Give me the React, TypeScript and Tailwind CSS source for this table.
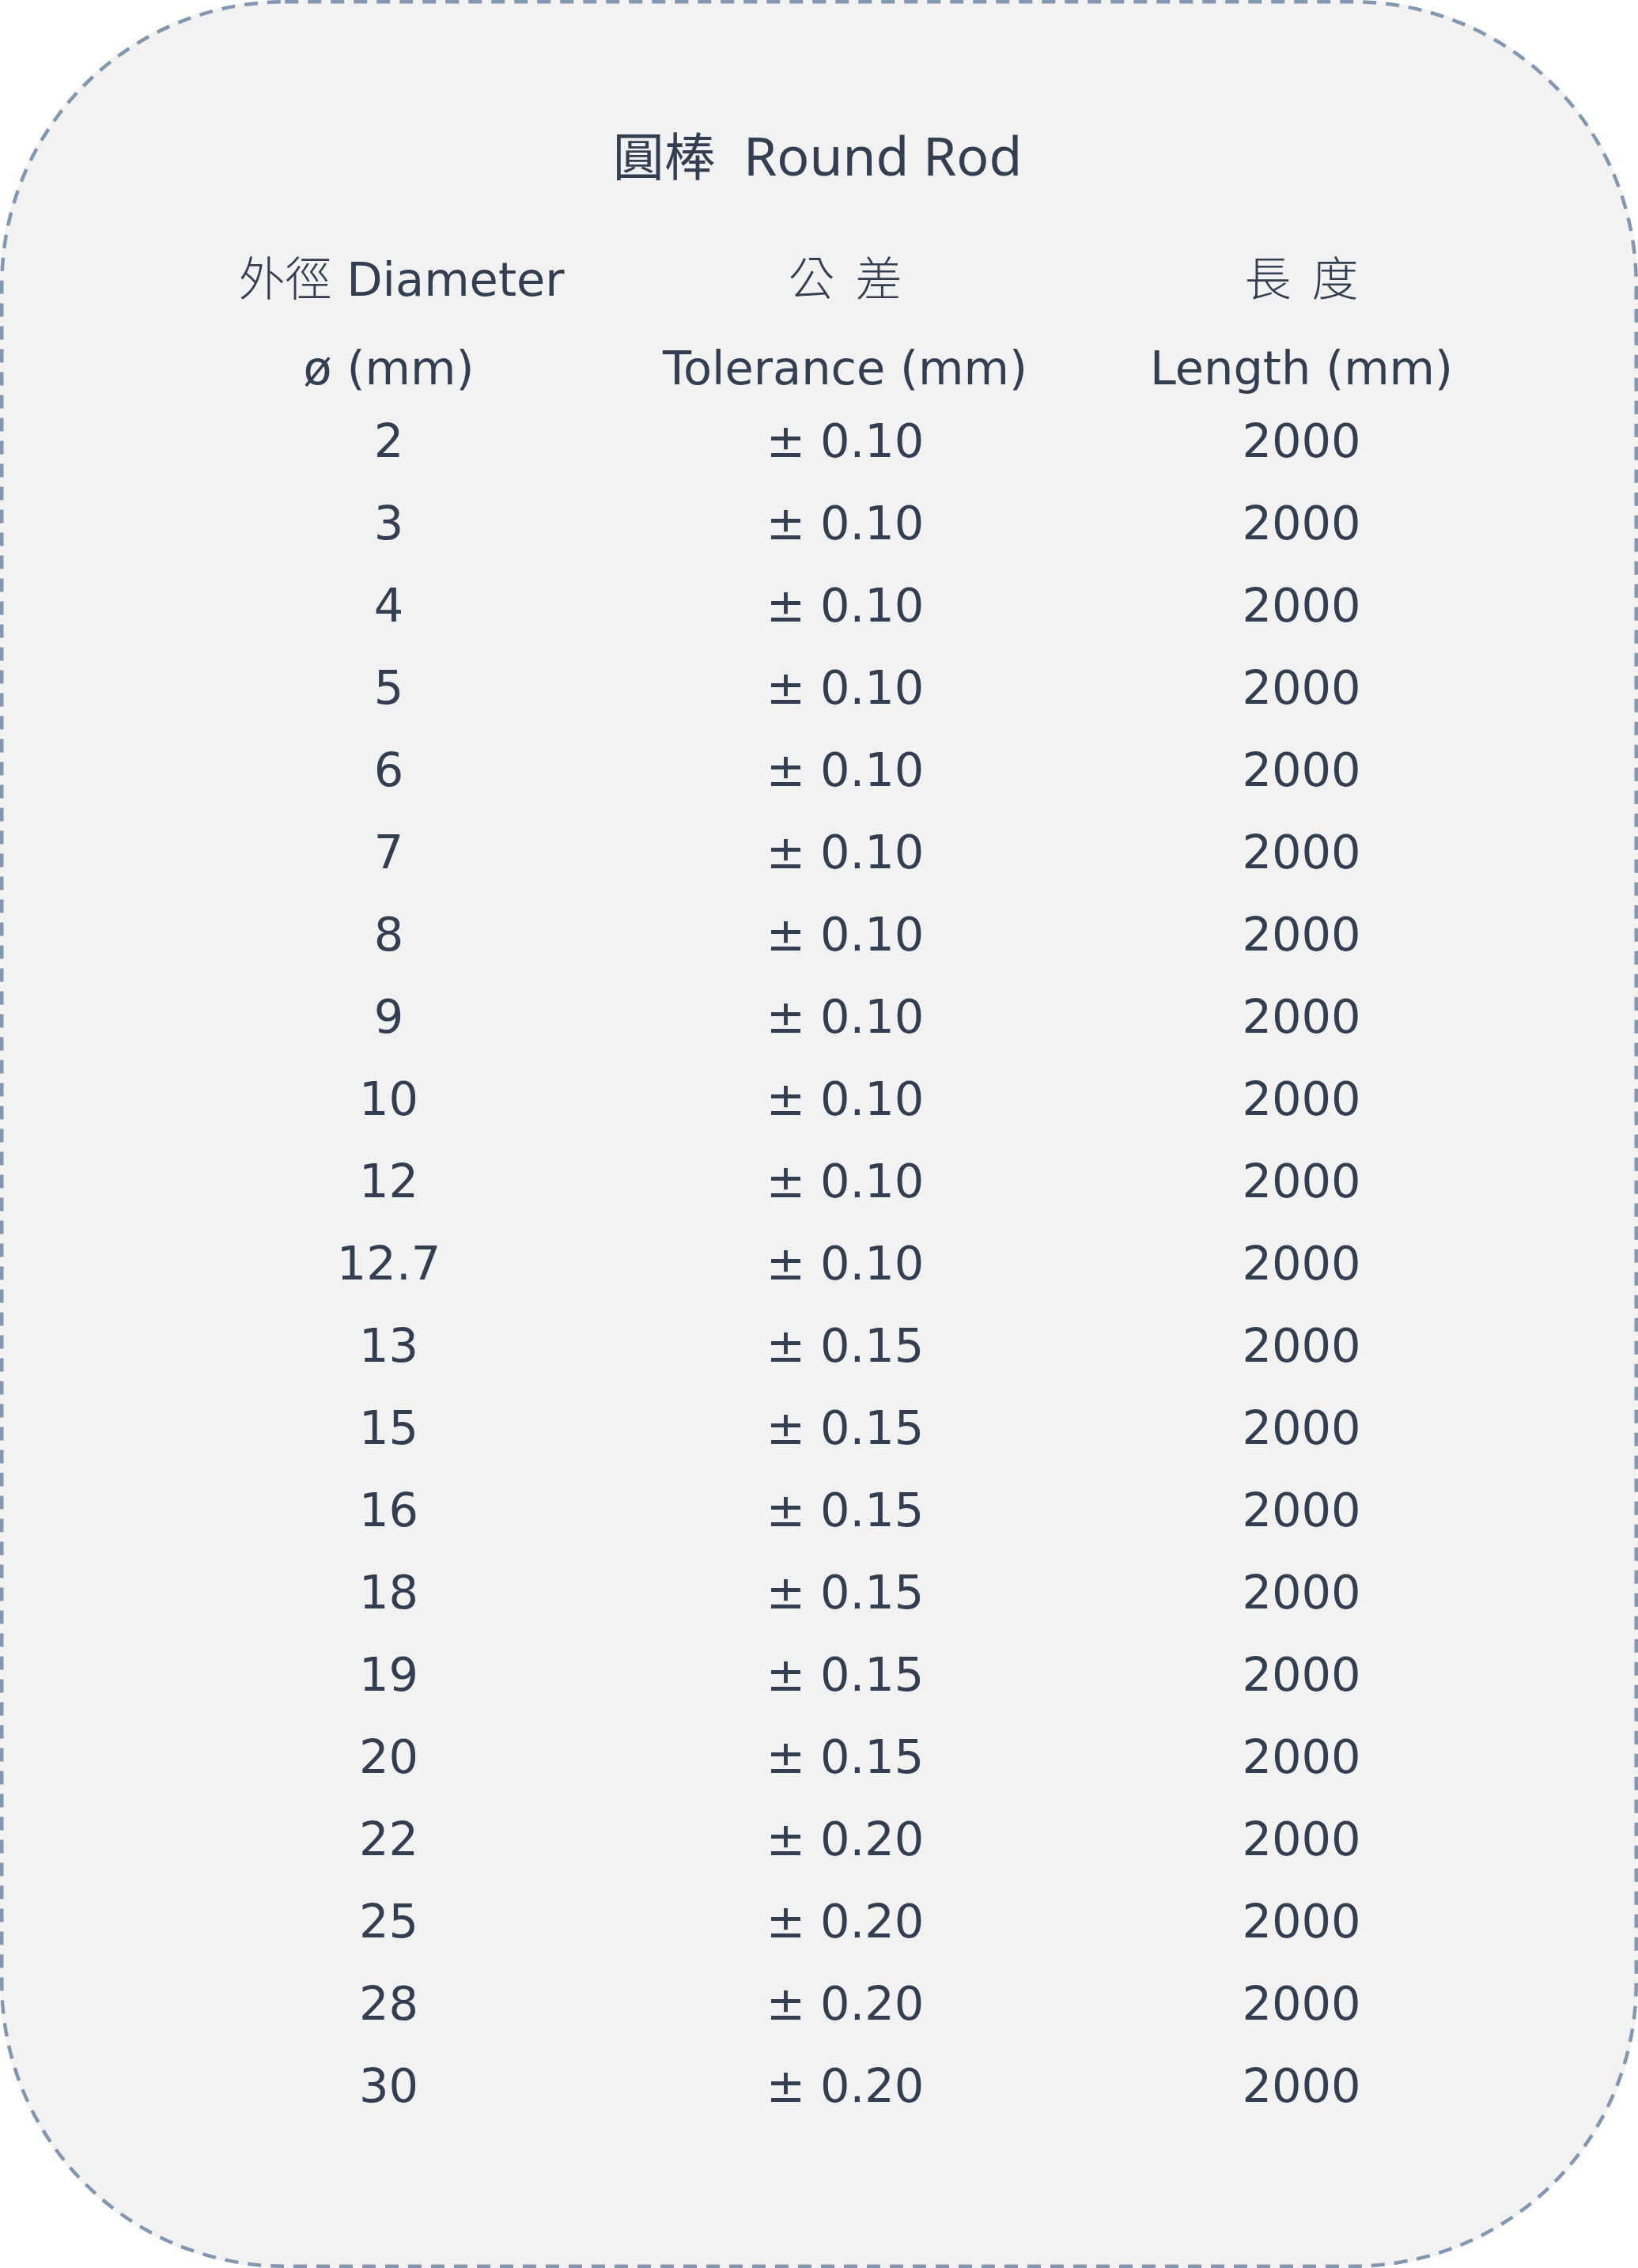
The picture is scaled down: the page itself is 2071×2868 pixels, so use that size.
const rows: [string, string][] = [
  ['2', '0.10'],
  ['3', '0.10'],
  ['4', '0.10'],
  ['5', '0.10'],
  ['6', '0.10'],
  ['7', '0.10'],
  ['8', '0.10'],
  ['9', '0.10'],
  ['10', '0.10'],
  ['12', '0.10'],
  ['12.7', '0.10'],
  ['13', '0.15'],
  ['15', '0.15'],
  ['16', '0.15'],
  ['18', '0.15'],
  ['19', '0.15'],
  ['20', '0.15'],
  ['22', '0.20'],
  ['25', '0.20'],
  ['28', '0.20'],
  ['30', '0.20'],
]

const cjk = "font-['Noto_Sans_CJK_TC',sans-serif] font-light"

// dashed outline drawn over the card so the dash rhythm matches (17 on / 12 off)
function DashedOutline() {
  return (
    <svg className="pointer-events-none absolute inset-0 h-full w-full" viewBox="0 0 2071 2868" preserveAspectRatio="none">
      <rect
        x="2.25"
        y="2.25"
        width="2066.5"
        height="2863.5"
        rx="358"
        ry="358"
        fill="none"
        stroke="#8497b0"
        strokeWidth="4.5"
        strokeDasharray="17 12"
      />
    </svg>
  )
}

export default function App() {
  return (
    <div className="min-h-screen bg-white">
      <div className="relative h-[2868px] w-full rounded-[360px] bg-[#f2f2f2] pt-[161px] text-[#333f50] font-['DejaVu_Sans',sans-serif]">
        <DashedOutline />

        <h1 className="h-[70px] pr-[4px] text-center text-[68px] leading-[70px] whitespace-pre font-['Noto_Sans','Noto_Sans_CJK_TC',sans-serif]">
          <span className="text-[65px]">圓棒</span>  Round Rod
        </h1>

        <div className="mt-[78px] grid grid-cols-[577px_577px_577px] pl-[203px] text-center text-[59px]">
          <div className="h-[80px] pl-[32px] leading-[80px]">
            <span className={cjk}>外徑</span> Diameter
          </div>
          <div className={`h-[80px] leading-[80px] whitespace-pre ${cjk}`}>公  差</div>
          <div className={`h-[80px] leading-[80px] whitespace-pre ${cjk}`}>長  度</div>

          <div className="mt-[37px] h-[80px] leading-[80px]">ø (mm)</div>
          <div className="mt-[37px] h-[80px] leading-[80px]">Tolerance (mm)</div>
          <div className="mt-[37px] h-[80px] leading-[80px]">Length (mm)</div>

          {rows.map(([d, t]) => (
            <div key={d} className="contents">
              <div className="h-[104px] leading-[104px]">{d}</div>
              <div className="h-[104px] leading-[104px]">± {t}</div>
              <div className="h-[104px] leading-[104px]">2000</div>
            </div>
          ))}
        </div>
      </div>
    </div>
  )
}
